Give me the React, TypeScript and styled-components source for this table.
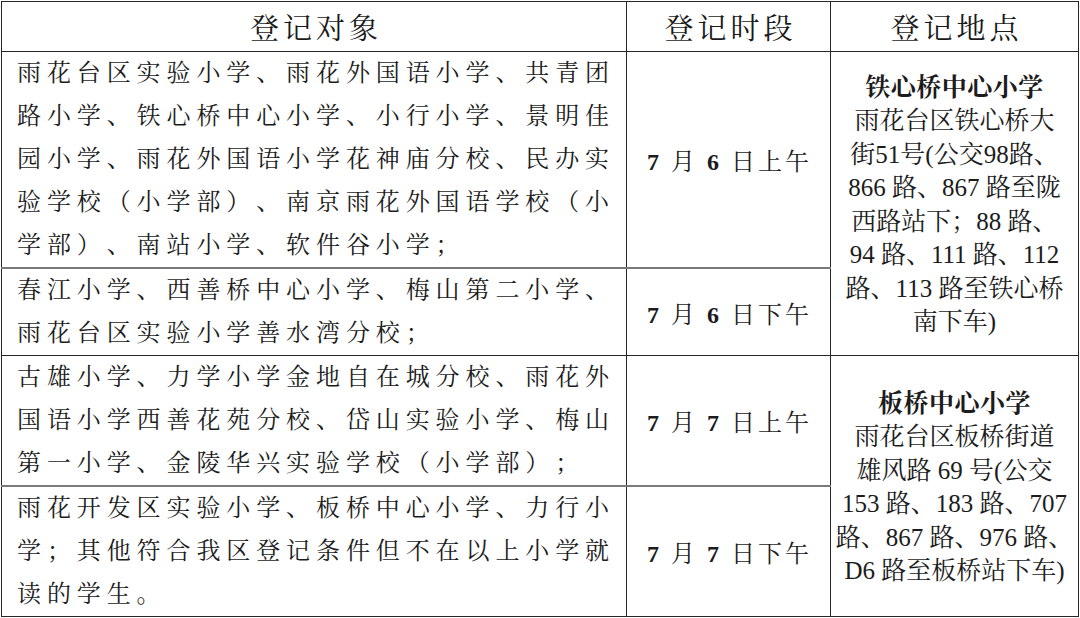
import React from "react";
import styled, { createGlobalStyle } from "styled-components";

const GlobalStyle = createGlobalStyle`
  html, body {
    margin: 0;
    padding: 0;
    background: #ffffff;
  }
  body {
    font-family: "Liberation Serif", "Noto Serif CJK SC", "Noto Sans CJK SC", serif;
    color: #1c1c1c;
    text-spacing-trim: space-all;
  }
`;

const Page = styled.div`
  padding: 1px 0 0 1px;
  width: 1080px;
  height: 618px;
  box-sizing: border-box;
  overflow: hidden;
`;

const Table = styled.table`
  width: 1077px;
  table-layout: fixed;
  border-collapse: collapse;
  border: 1.5px solid #262626;
`;

const HeadCell = styled.th`
  height: 49px;
  padding: 0 0 0 4px;
  font-weight: 400;
  font-size: 29px;
  letter-spacing: 4px;
  text-align: center;
  vertical-align: middle;
  border: 1.5px solid #262626;
  color: #1a1a1a;
`;

const Cell = styled.td<{ $soft?: boolean; $center?: boolean }>`
  padding: 0 ${(p) => (p.$center ? "0" : "8px")} 0 ${(p) => (p.$center ? "0" : "15px")};
  vertical-align: ${(p) => (p.$center ? "middle" : "top")};
  text-align: ${(p) => (p.$center ? "center" : "left")};
  border-left: 1.5px solid #262626;
  border-right: 1.5px solid #262626;
  border-top: ${(p) => (p.$soft ? "2px solid #7a7a7a" : "1.5px solid #262626")};
`;

const Line = styled.div`
  font-size: 24px;
  line-height: 43px;
  letter-spacing: 5.9px;
  white-space: nowrap;
  text-spacing-trim: space-all;
`;

const TimeText = styled.div`
  font-size: 24px;
  letter-spacing: 3px;
  white-space: pre;
  padding-left: 2px;
`;

const Num = styled.span`
  font-weight: 700;
`;

const Place = styled.div`
  font-size: 25px;
  line-height: 33.5px;
  white-space: pre;
  text-align: center;
  padding-top: 2px;
  text-spacing-trim: space-all;
`;

const PlaceName = styled.div`
  font-weight: 700;
  letter-spacing: 0.5px;
`;

type Row = {
  lines: string[];
  day: string;
  half: string;
  soft?: boolean;
  place?: { name: string; lines: string[] };
};

const rows: Row[] = [
  {
    lines: [
      "雨花台区实验小学、雨花外国语小学、共青团",
      "路小学、铁心桥中心小学、小行小学、景明佳",
      "园小学、雨花外国语小学花神庙分校、民办实",
      "验学校（小学部）、南京雨花外国语学校（小",
      "学部）、南站小学、软件谷小学；",
    ],
    day: "6",
    half: "上午",
    place: {
      name: "铁心桥中心小学",
      lines: [
        "雨花台区铁心桥大",
        "街51号(公交98路、",
        "866 路、867 路至陇",
        "西路站下；88 路、",
        "94 路、111 路、112",
        "路、113 路至铁心桥",
        "南下车)",
      ],
    },
  },
  {
    lines: ["春江小学、西善桥中心小学、梅山第二小学、", "雨花台区实验小学善水湾分校；"],
    day: "6",
    half: "下午",
    soft: true,
  },
  {
    lines: [
      "古雄小学、力学小学金地自在城分校、雨花外",
      "国语小学西善花苑分校、岱山实验小学、梅山",
      "第一小学、金陵华兴实验学校（小学部）；",
    ],
    day: "7",
    half: "上午",
    place: {
      name: "板桥中心小学",
      lines: [
        "雨花台区板桥街道",
        "雄风路 69 号(公交",
        "153 路、183 路、707",
        "路、867 路、976 路、",
        "D6 路至板桥站下车)",
      ],
    },
  },
  {
    lines: [
      "雨花开发区实验小学、板桥中心小学、力行小",
      "学；其他符合我区登记条件但不在以上小学就",
      "读的学生。",
    ],
    day: "7",
    half: "下午",
    soft: true,
  },
];

const App: React.FC = () => {
  return (
    <Page>
      <GlobalStyle />
      <Table>
        <colgroup>
          <col style={{ width: "625px" }} />
          <col style={{ width: "204px" }} />
          <col style={{ width: "248px" }} />
        </colgroup>
        <thead>
          <tr>
            <HeadCell>登记对象</HeadCell>
            <HeadCell>登记时段</HeadCell>
            <HeadCell>登记地点</HeadCell>
          </tr>
        </thead>
        <tbody>
          {rows.map((row, i) => (
            <tr key={i}>
              <Cell $soft={row.soft}>
                {row.lines.map((line, j) => (
                  <Line key={j}>{line}</Line>
                ))}
              </Cell>
              <Cell $soft={row.soft} $center>
                <TimeText>
                  <Num>7</Num> 月 <Num>{row.day}</Num> 日{row.half}
                </TimeText>
              </Cell>
              {row.place && (
                <Cell rowSpan={2} $center>
                  <Place>
                    <PlaceName>{row.place.name}</PlaceName>
                    {row.place.lines.map((l, k) => (
                      <div key={k}>{l}</div>
                    ))}
                  </Place>
                </Cell>
              )}
            </tr>
          ))}
        </tbody>
      </Table>
    </Page>
  );
};

export default App;
